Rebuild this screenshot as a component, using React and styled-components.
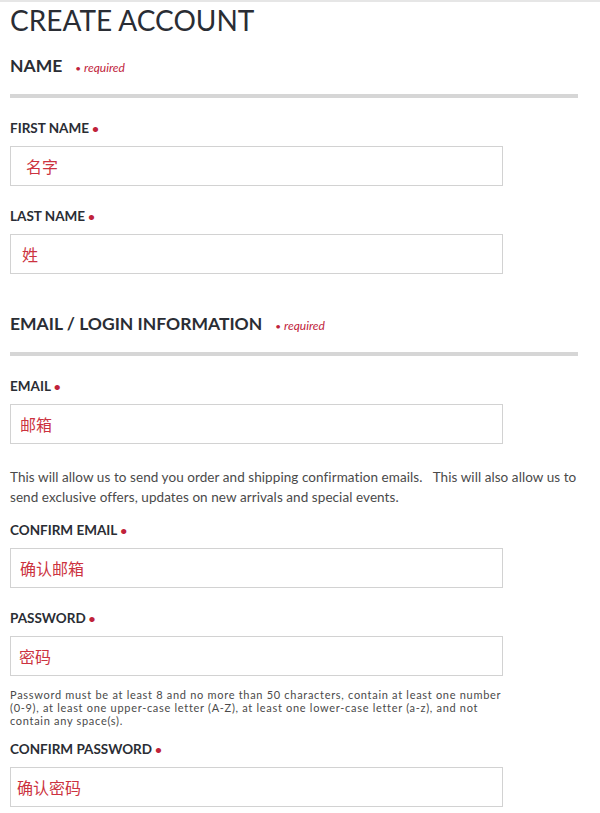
import React from 'react';
import styled, { createGlobalStyle } from 'styled-components';

const GlobalStyle = createGlobalStyle`
	html, body {
		margin: 0;
		padding: 0;
		background: #ffffff;
	}
	body {
		font-family: Lato, "Noto Sans CJK SC", sans-serif;
		color: #2b2e36;
	}
`;

const Page = styled.div`
	border-top: 2px solid #e6e6e6;
	padding: 0 22px 0 10px;
	width: 600px;
	box-sizing: border-box;
`;

const Title = styled.h1`
	margin: 1px 0 0;
	font-family: Lato, sans-serif;
	font-weight: 400;
	font-size: 28px;
	line-height: 34px;
	color: #2a2d34;
`;

const Section = styled.section`
	margin-top: ${({ top }) => top}px;
`;

const SectionHead = styled.div`
	display: flex;
	align-items: baseline;
	gap: 13px;
	padding-bottom: 17px;
	border-bottom: 4px solid #d6d6d6;
`;

const SectionTitle = styled.h2`
	margin: 0;
	font-family: Lato, sans-serif;
	font-weight: 700;
	font-size: 17.5px;
	line-height: 22px;
	color: #2a2d34;
`;

const Required = styled.span`
	font-family: Lato, sans-serif;
	font-style: italic;
	font-size: 12px;
	line-height: 1;
	color: #c0223a;
	&::before {
		content: '•';
		font-style: normal;
		font-size: 10px;
		margin-right: 3px;
	}
`;

const Field = styled.div`
	margin-top: ${({ top }) => top}px;
`;

const Label = styled.label`
	display: block;
	font-family: Lato, sans-serif;
	font-weight: 700;
	font-size: 13.5px;
	line-height: 16px;
	height: 16px;
	color: #2a2d34;
	margin-bottom: 10px;
	&::after {
		content: ' •';
		color: #c0223a;
		font-size: 12px;
		line-height: 1;
	}
`;

const Input = styled.input`
	display: block;
	box-sizing: border-box;
	width: 493px;
	height: 40px;
	border: 1px solid #d2d2d2;
	padding: 0 0 0 ${({ indent }) => indent}px;
	font-family: "Noto Sans CJK SC", sans-serif;
	font-size: 16px;
	color: #cc3340;
	outline: none;
	background: #fff;
	&::placeholder {
		color: #cc3340;
		opacity: 1;
	}
`;

const Help = styled.p`
	margin: ${({ top }) => top}px 0 0;
	font-family: Lato, sans-serif;
	font-size: ${({ size }) => size}px;
	line-height: ${({ lh }) => lh}px;
	letter-spacing: ${({ ls }) => ls}px;
	color: #4a4a4a;
	width: ${({ w }) => w}px;
`;

const nameFields = [
	{ label: 'FIRST NAME', ph: '名字', indent: 15, top: 22 },
	{ label: 'LAST NAME', ph: '姓', indent: 11, top: 22 },
];

const App = () => {
	return (
		<Page>
			<GlobalStyle />
			<Title>CREATE ACCOUNT</Title>
			<Section top={18}>
				<SectionHead>
					<SectionTitle>NAME</SectionTitle>
					<Required>required</Required>
				</SectionHead>
				{nameFields.map((f) => (
					<Field key={f.label} top={f.top}>
						<Label>{f.label}</Label>
						<Input placeholder={f.ph} indent={f.indent} />
					</Field>
				))}
			</Section>
			<Section top={39}>
				<SectionHead>
					<SectionTitle>EMAIL / LOGIN INFORMATION</SectionTitle>
					<Required>required</Required>
				</SectionHead>
				<Field top={22}>
					<Label>EMAIL</Label>
					<Input placeholder="邮箱" indent={9} />
				</Field>
				<Help top={23} size={13.5} lh={20} ls={0.07} w={580}>
					This will allow us to send you order and shipping confirmation emails.&nbsp;&nbsp; This will also allow us to send exclusive offers, updates on new arrivals and special events.
				</Help>
				<Field top={15}>
					<Label>CONFIRM EMAIL</Label>
					<Input placeholder="确认邮箱" indent={9} />
				</Field>
				<Field top={22}>
					<Label>PASSWORD</Label>
					<Input placeholder="密码" indent={8} />
				</Field>
				<Help top={12} size={11} lh={13.2} ls={0.7} w={500}>
					Password must be at least 8 and no more than 50 characters, contain at least one number (0-9), at least one upper-case letter (A-Z), at least one lower-case letter (a-z), and not contain any space(s).
				</Help>
				<Field top={13}>
					<Label>CONFIRM PASSWORD</Label>
					<Input placeholder="确认密码" indent={6} />
				</Field>
			</Section>
		</Page>
	);
};

export default App;
